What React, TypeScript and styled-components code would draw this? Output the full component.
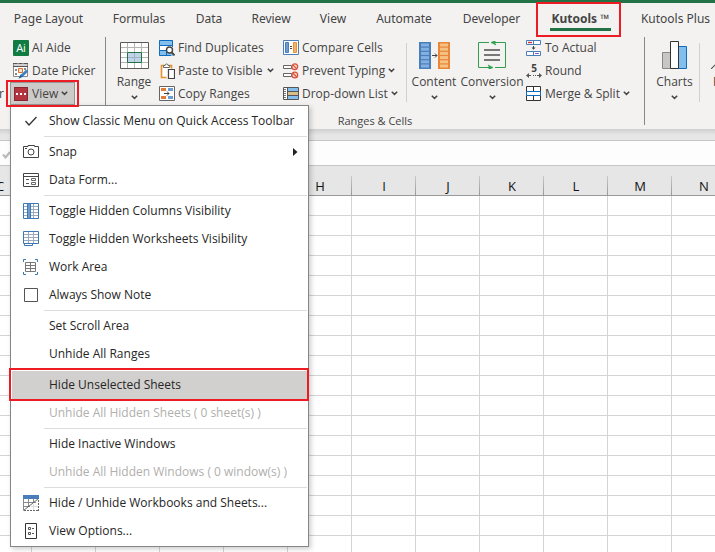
import React from "react";
import styled, { createGlobalStyle, css } from "styled-components";

const GlobalStyle = createGlobalStyle`
  *, *::before, *::after { box-sizing: border-box; }
  html, body { margin: 0; padding: 0; }
  body {
    font-family: "Open Sans", "Noto Sans", sans-serif;
    font-size: 12px;
    line-height: 16px;
    color: #444;
    background: #fff;
    overflow: hidden;
  }
  button, a, input { font: inherit; color: inherit; }
  svg { display: block; flex: none; }
`;

const green = "#217346";
const red = "#ed1c24";

const Page = styled.div`
  display: flex;
  flex-direction: column;
  height: 100vh;
  overflow: hidden;
`;

const TitleStrip = styled.div`
  flex: none;
  height: 3px;
  background: ${green};
`;

const TabRow = styled.nav`
  flex: none;
  display: flex;
  height: 33px;
  background: #f3f2f1;
`;

const Tab = styled.a<{ $width: number; $active?: boolean }>`
  position: relative;
  flex: none;
  display: flex;
  flex-direction: column;
  align-items: center;
  width: ${(p) => p.$width}px;
  padding-top: 7px;
  font-family: "Noto Sans", "Open Sans", sans-serif;
  font-size: 12px;
  line-height: 18px;
  white-space: nowrap;
  text-decoration: none;
  color: #444;
  ${(p) =>
    p.$active &&
    css`
      font-weight: 700;
    `}
`;

const TabUnderline = styled.span`
  width: 61px;
  height: 3px;
  background: ${green};
`;

const Highlight = styled.span<{ $inset: string }>`
  position: absolute;
  z-index: 3;
  inset: ${(p) => p.$inset};
  border: 2px solid ${red};
  pointer-events: none;
`;

const Ribbon = styled.div`
  flex: none;
  display: flex;
  height: 93px;
  background: #f3f2f1;
`;

const Group = styled.section<{ $width?: number; $indent: number }>`
  flex: none;
  display: flex;
  flex-direction: column;
  width: ${(p) => (p.$width ? `${p.$width}px` : "auto")};
  padding-left: ${(p) => p.$indent}px;
`;

const GroupBody = styled.div<{ $indent: number }>`
  display: flex;
  height: 69px;
  padding-left: ${(p) => p.$indent}px;
`;

const GroupLabel = styled.div`
  padding-top: 8px;
  text-align: center;
  font-size: 11px;
  line-height: 16px;
`;

const GroupDivider = styled.div`
  flex: none;
  width: 1px;
  height: 88px;
  margin-top: 1px;
  background: #8a8886;
`;

const ItemDivider = styled.div`
  flex: none;
  width: 1px;
  height: 59px;
  margin-top: 7px;
  background: #d2d0ce;
`;

const Column = styled.div<{ $width: number }>`
  flex: none;
  width: ${(p) => p.$width}px;
`;

const SmallButton = styled.button<{ $pressed?: boolean; $gap?: number }>`
  display: flex;
  align-items: center;
  gap: 3px;
  height: 23px;
  padding: 0 6px 0 3px;
  border: 0;
  background: none;
  white-space: nowrap;
  & > svg:last-child:not(:first-child) {
    margin-left: ${(p) => p.$gap ?? 0}px;
  }
  ${(p) =>
    p.$pressed &&
    css`
      width: 65px;
      background: #cdcbc9;
      box-shadow: inset 0 0 0 1px #979593;
    `}
`;

const LargeButton = styled.button<{ $width: number }>`
  flex: none;
  display: flex;
  flex-direction: column;
  align-items: center;
  width: ${(p) => p.$width}px;
  height: 69px;
  padding: 5px 0 0;
  border: 0;
  background: none;
  white-space: nowrap;
`;

const LargeArt = styled.span`
  display: flex;
  align-items: center;
  height: 28px;
`;

const LargeLabel = styled.span`
  display: flex;
  justify-content: center;
  width: 100%;
  margin: 5px 0;
`;

const EdgeText = styled.span`
  flex: none;
  display: flex;
  align-items: flex-end;
  justify-content: flex-end;
  width: 4px;
  height: 66px;
`;

const MenuAnchor = styled.div`
  position: relative;
  width: 65px;
`;

const Menu = styled.div`
  position: absolute;
  z-index: 2;
  top: 100%;
  left: 0;
  width: 299px;
  padding: 1px 0;
  border: 1px solid #868686;
  background: #fff;
  box-shadow: 2px 2px 5px rgba(0, 0, 0, 0.2);
`;

const MenuItem = styled.button<{ $selected?: boolean }>`
  position: relative;
  display: grid;
  grid-template-columns: 36px 1fr 9px;
  align-items: center;
  width: 100%;
  height: 28px;
  padding: 0 6px 0 2px;
  border: 0;
  text-align: left;
  white-space: nowrap;
  color: #262626;
  background: ${(p) => (p.$selected ? "#d2d0ce" : "none")};
  box-shadow: ${(p) => (p.$selected ? "inset 1px 0 #fff, inset -1px 0 #fff" : "none")};
  &:disabled {
    color: #b1afad;
  }
`;

const MenuIcon = styled.span`
  display: flex;
  justify-content: center;
`;

const MenuDivider = styled.hr`
  height: 1px;
  margin: 1px 1px 1px 33px;
  border: 0;
  background: #dcdcdc;
`;

const FormulaGap = styled.div`
  flex: none;
  height: 12px;
  border-bottom: 1px solid #c6c6c6;
  background: linear-gradient(#cfcfcf, #e6e6e6 6px);
`;

const FormulaBar = styled.div`
  flex: none;
  display: flex;
  align-items: center;
  height: 25px;
  padding: 3px 2px 0;
  border-bottom: 1px solid #c6c6c6;
  background: #fdfdfd;
`;

const SheetArea = styled.main`
  flex: 1;
  min-height: 0;
  overflow: hidden;
`;

const Sheet = styled.table`
  width: 768px;
  margin-left: -32px;
  table-layout: fixed;
  border-collapse: separate;
  border-spacing: 0;
`;

const ColumnHead = styled.th`
  height: 30px;
  padding: 10px 0 0;
  border-bottom: 1px solid #999;
  font-weight: 400;
  font-size: 13px;
  line-height: 18px;
  color: #111;
  background: linear-gradient(#c8c8c8, #999) right bottom / 1px 19px no-repeat #e6e6e6;
`;

const Cell = styled.td`
  height: 20px;
  padding: 0;
  border-right: 1px solid #d4d4d4;
  border-bottom: 1px solid #d4d4d4;
`;

/* ---------- icons ---------- */

const Icon = ({ w = 16, h = 16, children }: { w?: number; h?: number; children: React.ReactNode }) => (
  <svg width={w} height={h} viewBox={`0 0 ${w} ${h}`} fill="none" aria-hidden="true">
    {children}
  </svg>
);

const Chevron = () => (
  <Icon w={7} h={5}>
    <path d="M.8 .8 3.5 3.4 6.2 .8" stroke="#444" strokeWidth="1.5" />
  </Icon>
);

const AiIcon = () => (
  <Icon>
    <rect width="16" height="16" rx="1" fill="#107c41" />
    <text x="8" y="12" fontSize="11" textAnchor="middle" fill="#fff">Ai</text>
  </Icon>
);

const DateIcon = () => (
  <Icon>
    <path d="M.5.5h14v13H.5z" fill="#fff" stroke="#8a8a8a" />
    <path d="M1 1h13v2.500H1z" fill="#d0d0d0" />
    <path d="M0 .5h4M6 .5h3M11 .5h4M0 3.500h15" stroke="#555" />
    <path d="M2 6h2v2H2zM2 10h2v2H2zM11 5h2v2h-2z" fill="#888" />
    <path d="M5.500 5.500h4v4h-4z" stroke="#e07020" fill="#fbe3d0" />
    <path d="m7 14.500 1-3 5.200-5 2 2-5.200 5z" fill="#3c82c8" />
    <path d="m5.500 15.800 2-4.300 2.300 2.300z" fill="#1f5f9f" />
  </Icon>
);

const ViewIcon = () => (
  <Icon>
    <rect x="1.5" y="1.5" width="13" height="13" fill="#b2343f" stroke="#8c2630" />
    <path d="M3 7h2v2H3zM7 7h2v2H7zM11 7h2v2h-2z" fill="#fff" />
  </Icon>
);

const RangeIcon = () => (
  <Icon w={29} h={27}>
    <path d="M.5.5h28v26H.5z" fill="#fff" />
    <path d="M7.5 1v25M14.5 1v25M21.5 1v25M1 5.5h27M1 10.5h27M1 15.5h27M1 20.5h27" stroke="#b4b4b4" />
    <path d="M7.5 10.5h14v10h-14z" fill="#c0d4e8" stroke="#217346" />
    <path d="M14.5 11v9M8 15.5h13" stroke="#9fb2c4" />
    <path d="M.5.5h28v26H.5z" stroke="#5a5a5a" />
  </Icon>
);

const FindIcon = () => (
  <Icon>
    <path d="M0 0h14v5H0zM0 11h14v5H0z" fill="#83beec" />
    <path d="M0 6h14v4H0z" fill="#fff" />
    <path d="M.5.5h13v5H.5zM.5 5.5v5M.5 10.5h7v5h-7zM13.5 5v2M7 15.5h5" stroke="#0f6cbd" />
    <circle cx="10.5" cy="10" r="3" fill="#fff" stroke="#444" strokeWidth="1.4" />
    <path d="m12.5 12.2 3 3.2" stroke="#444" strokeWidth="1.8" />
  </Icon>
);

const PasteIcon = () => (
  <Icon>
    <path d="M2.5 2.5h10v12h-10z" fill="#fff" stroke="#e8912d" strokeWidth="1.6" />
    <path d="M4.5 4.5v-2h1.6a1.5 1.5 0 0 1 3 0h1.6v2z" fill="#fff" stroke="#666" />
    <path d="M7.500 5.500h8v10h-8z" fill="#f3f2f1" />
    <path d="M9.500 6.500h6v9h-6z" fill="#fff" stroke="#444" strokeWidth="1.2" />
  </Icon>
);

const CopyIcon = () => (
  <Icon>
    <path d="M.5.5h15v14H.5z" fill="#fff" stroke="#666" />
    <path d="M2 2h5v3H2zM2 10h5v3H2z" fill="#e07b39" />
    <path d="M9 2h5v3H9zM9 10h5v3H9z" fill="#6c9bd2" />
    <path d="M5 7.5h5M8 5.500l2 2-2 2" stroke="#444" />
  </Icon>
);

const CompareIcon = () => (
  <Icon>
    <path d="M.5.5h15v14H.5z" fill="#fff" stroke="#4a7ebb" />
    <path d="M2.5 2.5h3v10h-3z" fill="#6c9bd2" stroke="#4a7ebb" />
    <path d="M10.5 2.5h3v10h-3z" fill="#f4b26c" stroke="#e8912d" />
    <path d="M7 6.5h2M7 8.5h2" stroke="#444" />
  </Icon>
);

const PreventIcon = () => (
  <Icon>
    <path d="M.5 2.5h8v3h-8zM.5 10.5h8v3h-8z" fill="#fff" stroke="#666" />
    <g fill="#f8d5cb" stroke="#d8533c" strokeWidth="1.2">
      <circle cx="11.8" cy="3.8" r="2.9" />
      <circle cx="11.8" cy="12" r="2.9" />
      <path d="m9.8 1.9 4 4M9.8 10l4 4" />
    </g>
  </Icon>
);

const DropdownIcon = () => (
  <Icon>
    <path d="M.5 1.5h15v12H.5z" fill="#fff" />
    <path d="M5 2h10v4H5zM5 10h10v3H5z" fill="#83beec" />
    <path d="M5 6h10v3H5z" fill="#d9bd8b" />
    <path d="M.5 1.5h15v12H.5zM4.500 1v13M5 5.500h11M5 9.500h11" stroke="#555" />
    <path d="M1 3.500h2M1 5.500h2M1 7.500h2M1 9.500h2M1 11.500h2" stroke="#777" />
  </Icon>
);

const cellRows = [0, 1, 2, 3, 4, 5];

const ContentIcon = () => (
  <Icon w={31} h={27}>
    <path d="M0 0h12v27H0z" fill="#4a7ebb" />
    <path d="M19 0h12v27H19z" fill="#e8873a" />
    {cellRows.map((row) => (
      <g key={row}>
        <path d={`M2 ${1.5 + row * 4.2}h8v3H2z`} fill="#83b0e0" />
        <path d={`M21 ${1.5 + row * 4.2}h8v3h-8z`} fill="#f6c183" />
      </g>
    ))}
    <path d="M13 13.5h5M16 11.500l2 2-2 2" stroke="#444" />
  </Icon>
);

const ConversionIcon = () => (
  <Icon w={28} h={28}>
    <path d="M11 1.500H.5v25H10M17 26.500h10.500v-25H17" stroke="#2f9e4f" />
    <path d="M10 26.500h3M15 1.500h3" stroke="#2f9e4f" />
    <path d="m18-.8-5 2.300 5 2.500-1.500-2.500zM10 24l5 2.500-5 2.500 1.500-2.500z" fill="#2f9e4f" stroke="#2f9e4f" strokeWidth=".6" />
    <path d="M6 9h16M6 14h16M6 19h16" stroke="#777" strokeWidth="2" />
  </Icon>
);

const ActualIcon = () => (
  <Icon>
    <path d="M.5.5h14v4H.5zM.5 11.500h14v4H.5zM7.500.5v4M7.500 11.500v4" fill="#fff" stroke="#4a7ebb" />
    <path d="M2 2.500h4" stroke="#d13438" strokeWidth="1.400" />
    <path d="M9 13.500h4" stroke="#8661c5" />
    <path d="M7.500 6v3" stroke="#444" />
    <path d="M5.500 7.500h4l-2 2.300z" fill="#444" />
  </Icon>
);

const RoundIcon = () => (
  <Icon>
    <text x="8" y="9" fontSize="10" fontWeight="700" textAnchor="middle" fill="#444">5</text>
    <path d="M1 12.500h4M11 12.500h4" stroke="#555" strokeWidth="1.200" />
    <path d="M0 12.500 3 10v5zM16 12.500 13 10v5z" fill="#555" />
    <path d="M7 12h1v1H7zM9 12h1v1H9z" fill="#555" />
  </Icon>
);

const MergeIcon = () => (
  <Icon>
    <path d="M.5.5h14v14H.5z" fill="#fff" stroke="#333" />
    <path d="M7.500 1v4M7.500 10v4" stroke="#333" />
    <path d="M.5 5.500h14v4H.5z" fill="#fff" stroke="#0f6cbd" />
  </Icon>
);

const ChartsIcon = () => (
  <Icon w={25} h={28}>
    <path d="M.5 11.500h8v16h-8z" fill="#c8c6c4" stroke="#888" />
    <path d="M16.500 5.500h8v22h-8z" fill="#83beec" stroke="#0f6cbd" />
    <path d="M8.500.5h8v27h-8z" fill="#fff" stroke="#333" />
  </Icon>
);

const SlopeIcon = () => (
  <Icon w={28} h={28}>
    <path d="M0 28 6 22l4 3 8-12 10-5" stroke="#555" strokeWidth="1.200" />
  </Icon>
);

const CheckIcon = () => (
  <Icon w={14} h={12}>
    <path d="m1.500 6 3.500 4L12.500 2" stroke="#333" strokeWidth="1.300" />
  </Icon>
);

const SnapIcon = () => (
  <Icon>
    <path d="M.5 2.500h4.500v-1h6.500v1h4v11H.5z" stroke="#444" />
    <circle cx="8" cy="8" r="3" stroke="#444" />
    <path d="M2 4h2v1H2z" fill="#444" />
  </Icon>
);

const FormIcon = () => (
  <Icon>
    <path d="M.5 1.500h15v13H.5zM0 4.500h16" stroke="#444" />
    <path d="M3 7.500h3M3 11.500h3" stroke="#555" />
    <path d="M8.500 6.500h4v2h-4zM8.500 10.500h4v2h-4z" stroke="#666" />
  </Icon>
);

const ToggleColumnsIcon = () => (
  <Icon>
    <path d="M.5.5h15v15H.5z" fill="#fff" />
    <path d="M10.500 1v14M1 3.500h14M1 6.500h14M1 9.500h14M1 12.500h14" stroke="#9aabc0" />
    <path d="M4 0h4v16H4z" fill="#6c9bd2" />
    <path d="M.5.5h15v15H.5zM4.500 0v16M7.500 0v16" stroke="#3c78b4" />
  </Icon>
);

const ToggleSheetsIcon = () => (
  <Icon>
    <path d="M5.500 1v11M10.500 1v11M1 3.500h14M1 6.500h14M1 9.500h14" stroke="#9aabc0" />
    <path d="M.5.5h15v12H.5zM1.500 12.500v2h8v-2" stroke="#3c78b4" />
    <path d="M2 14h7v1H2z" fill="#3c78b4" />
  </Icon>
);

const WorkAreaIcon = () => (
  <Icon>
    <path d="M3 .5H.5V3M12 .5h2.500V3M.5 13v2.500H3M14.500 13v2.500H12" stroke="#3c78b4" />
    <path d="M2.500 3.500h10v9h-10zM7.500 3.500v9M2.500 6.500h10M2.500 9.500h10" stroke="#777" />
  </Icon>
);

const BoxIcon = () => (
  <Icon w={14} h={14}>
    <path d="M.5.5h13v13H.5z" fill="#fff" stroke="#555" />
  </Icon>
);

const WorkbooksIcon = () => (
  <Icon>
    <path d="M0 0h16v4H0z" fill="#4a7ebb" />
    <path d="M5.500 4v8M10.500 4v4M1 7.500h12M1 11.500h6M.5 4v11" stroke="#888" />
    <path d="M.5 15.500 15 4" stroke="#666" />
    <path d="M15.500 5v11M15 15.500H0" stroke="#666" strokeDasharray="2 1" />
    <path d="M10.500 9v6M8 11.500h7" stroke="#ddd" />
  </Icon>
);

const OptionsIcon = () => (
  <Icon w={12} h={16}>
    <path d="M.5.5h11v15H.5z" fill="#fff" stroke="#333" />
    <path d="M3.500 4.500h2v2h-2zM3.500 9.500h2v2h-2zM7 5.500h2M7 10.500h2" stroke="#555" />
  </Icon>
);

const SubmenuArrow = () => (
  <Icon w={5} h={8}>
    <path d="M0 0 4.500 4 0 8z" fill="#222" />
  </Icon>
);

const BarCheckIcon = () => (
  <Icon w={9} h={8}>
    <path d="m1 3.500 2.500 3L8 1" stroke="#b8b8b8" strokeWidth="2" />
  </Icon>
);

/* ---------- data ---------- */

const tabs = [
  { label: "Page Layout", width: 97 },
  { label: "Formulas", width: 84 },
  { label: "Data", width: 56 },
  { label: "Review", width: 68 },
  { label: "View", width: 56 },
  { label: "Automate", width: 86 },
  { label: "Developer", width: 89 },
  { label: "Kutools ™", width: 89, active: true },
  { label: "Kutools Plus", width: 101 },
];

type Entry = {
  label: string;
  icon?: React.ReactNode;
  submenu?: boolean;
  disabled?: boolean;
  selected?: boolean;
};

const sections: Entry[][] = [
  [{ label: "Show Classic Menu on Quick Access Toolbar", icon: <CheckIcon /> }],
  [
    { label: "Snap", icon: <SnapIcon />, submenu: true },
    { label: "Data Form...", icon: <FormIcon /> },
  ],
  [
    { label: "Toggle Hidden Columns Visibility", icon: <ToggleColumnsIcon /> },
    { label: "Toggle Hidden Worksheets Visibility", icon: <ToggleSheetsIcon /> },
    { label: "Work Area", icon: <WorkAreaIcon /> },
    { label: "Always Show Note", icon: <BoxIcon /> },
  ],
  [{ label: "Set Scroll Area" }, { label: "Unhide All Ranges" }],
  [
    { label: "Hide Unselected Sheets", selected: true },
    { label: "Unhide All Hidden Sheets ( 0 sheet(s) )", disabled: true },
  ],
  [
    { label: "Hide Inactive Windows" },
    { label: "Unhide All Hidden Windows ( 0 window(s) )", disabled: true },
  ],
  [
    { label: "Hide / Unhide Workbooks and Sheets...", icon: <WorkbooksIcon /> },
    { label: "View Options...", icon: <OptionsIcon /> },
  ],
];

const columns = ["C", "D", "E", "F", "G", "H", "I", "J", "K", "L", "M", "N"];
const rows = Array.from({ length: 18 }, (_, i) => i);

const ViewMenu = () => (
  <Menu role="menu" aria-label="View">
    {sections.map((entries, index) => (
      <React.Fragment key={index}>
        {index > 0 && <MenuDivider />}
        {entries.map((entry) => (
          <MenuItem key={entry.label} role="menuitem" disabled={entry.disabled} $selected={entry.selected}>
            <MenuIcon>{entry.icon}</MenuIcon>
            <span>{entry.label}</span>
            {entry.submenu && <SubmenuArrow />}
            {entry.selected && <Highlight $inset="-3px -1px -2px -2px" />}
          </MenuItem>
        ))}
      </React.Fragment>
    ))}
  </Menu>
);

type LargeProps = { label: string; width: number; icon: React.ReactNode; plain?: boolean };

const Large = ({ label, width, icon, plain }: LargeProps) => (
  <LargeButton $width={width}>
    <LargeArt>{icon}</LargeArt>
    <LargeLabel>{label}</LargeLabel>
    {!plain && <Chevron />}
  </LargeButton>
);

export default function App() {
  return (
    <Page>
      <GlobalStyle />
      <TitleStrip />
      <TabRow>
        {tabs.map((tab) => (
          <Tab key={tab.label} href="#" $width={tab.width} $active={tab.active}>
            {tab.label}
            {tab.active && <TabUnderline />}
            {tab.active && <Highlight $inset="-1px 4px -1px 0" />}
          </Tab>
        ))}
      </TabRow>

      <Ribbon>
        <EdgeText>r</EdgeText>
        <Group $width={101} $indent={6}>
          <SmallButton><AiIcon />AI Aide</SmallButton>
          <SmallButton><DateIcon />Date Picker</SmallButton>
          <MenuAnchor>
            <SmallButton $pressed aria-haspopup="menu" aria-expanded="true">
              <ViewIcon />View<Chevron />
            </SmallButton>
            <ViewMenu />
            <Highlight $inset="-2px -4px" />
          </MenuAnchor>
        </Group>
        <GroupDivider />
        <Group $width={538} $indent={0}>
          <GroupBody $indent={6}>
            <Large label="Range" width={44} icon={<RangeIcon />} />
            <Column $width={124}>
              <SmallButton><FindIcon />Find Duplicates</SmallButton>
              <SmallButton $gap={2}><PasteIcon />Paste to Visible<Chevron /></SmallButton>
              <SmallButton><CopyIcon />Copy Ranges</SmallButton>
            </Column>
            <Column $width={126}>
              <SmallButton><CompareIcon />Compare Cells</SmallButton>
              <SmallButton><PreventIcon />Prevent Typing<Chevron /></SmallButton>
              <SmallButton><DropdownIcon />Drop-down List<Chevron /></SmallButton>
            </Column>
            <ItemDivider />
            <Large label="Content" width={54} icon={<ContentIcon />} />
            <Large label="Conversion" width={62} icon={<ConversionIcon />} />
            <Column $width={120}>
              <SmallButton><ActualIcon />To Actual</SmallButton>
              <SmallButton><RoundIcon />Round</SmallButton>
              <SmallButton><MergeIcon />Merge &amp; Split<Chevron /></SmallButton>
            </Column>
          </GroupBody>
          <GroupLabel>Ranges &amp; Cells</GroupLabel>
        </Group>
        <GroupDivider />
        <Group $indent={0}>
          <GroupBody $indent={5}>
            <Large label="Charts" width={49} icon={<ChartsIcon />} />
            <ItemDivider />
            <Large label="Find" width={50} icon={<SlopeIcon />} plain />
          </GroupBody>
        </Group>
      </Ribbon>

      <FormulaGap />
      <FormulaBar><BarCheckIcon /></FormulaBar>

      <SheetArea>
        <Sheet>
          <thead>
            <tr>
              {columns.map((name) => (
                <ColumnHead key={name} scope="col">{name}</ColumnHead>
              ))}
            </tr>
          </thead>
          <tbody>
            {rows.map((row) => (
              <tr key={row}>
                {columns.map((name) => (
                  <Cell key={name} />
                ))}
              </tr>
            ))}
          </tbody>
        </Sheet>
      </SheetArea>
    </Page>
  );
}
